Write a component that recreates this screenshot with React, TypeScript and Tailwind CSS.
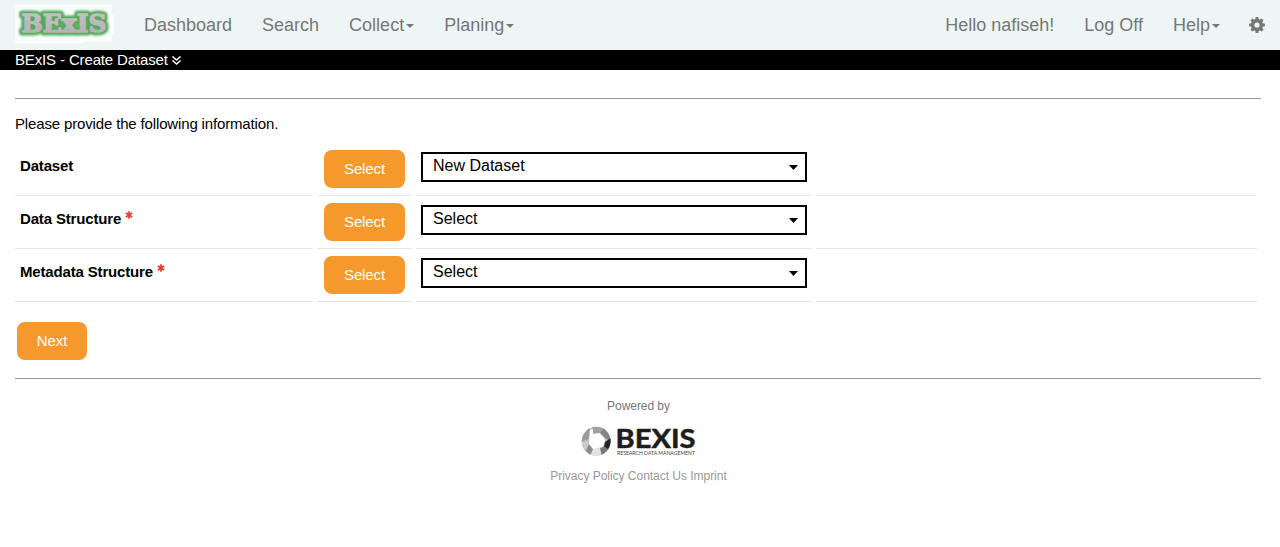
import React from "react";

function Caret({ className }: { className: string }) {
  return (
    <svg className={className} viewBox="0 0 10 5" preserveAspectRatio="none" aria-hidden="true">
      <path d="M0 0h10L5 5z" fill="currentColor" />
    </svg>
  );
}

function Asterisk({ className }: { className: string }) {
  return (
    <svg className={className} viewBox="-4 -4 8 8" aria-hidden="true">
      <g stroke="currentColor" strokeWidth="1.7">
        <path d="M0-3.8V3.8M-3.2-1.9 3.2 1.9M3.2-1.9-3.2 1.9" />
      </g>
    </svg>
  );
}

function DoubleChevron() {
  return (
    <svg className="ml-1 h-[9px] w-[9px]" viewBox="0 0 9 9" fill="none" stroke="currentColor" strokeWidth="1.5" aria-hidden="true">
      <path d="M.5.5 4.5 4 8.5.5M.5 4.5l4 3.5 4-3.5" />
    </svg>
  );
}

function Gear() {
  return (
    <svg className="h-4 w-4" viewBox="-8 -8 16 16" aria-hidden="true">
      <g fill="currentColor">
        {[0, 45, 90, 135].map((angle) => (
          <path key={angle} transform={`rotate(${angle})`} d="M-1.3-7.9h2.6l.7 3v9.8l-.7 3h-2.6l-.7-3v-9.8z" />
        ))}
      </g>
      <circle r="4.3" fill="none" stroke="currentColor" strokeWidth="3.4" />
      <circle r="2.6" fill="#eef6f5" />
    </svg>
  );
}

function BrandLogo() {
  return (
    <svg className="block h-10 w-[99px] shrink-0" viewBox="0 0 99 40" aria-label="BExIS">
      <defs>
        <filter id="glow" x="-10%" y="-30%" width="120%" height="160%">
          <feGaussianBlur stdDeviation="0.8" />
        </filter>
        <linearGradient id="silver" x1="0" y1="0" x2="0" y2="1">
          <stop offset="0" stopColor="#c8c4c8" />
          <stop offset="1" stopColor="#b0b0b0" />
        </linearGradient>
      </defs>
      <path d="M0 1h97v10h2v20h-2v7H68v1H0z" fill="#fafdfb" />
      <g fontFamily="DejaVu Serif" fontWeight="bold" fontSize="24">
        <text x="6.5" y="27.5" textLength="85" lengthAdjust="spacingAndGlyphs" fill="#4fae5a" stroke="#4fae5a" strokeWidth="7" strokeLinejoin="round" filter="url(#glow)">BExIS</text>
        <text x="7" y="28.2" textLength="85" lengthAdjust="spacingAndGlyphs" fill="#6f8a72" stroke="#6f8a72" strokeWidth="1.6">BExIS</text>
        <text x="6.5" y="27.5" textLength="85" lengthAdjust="spacingAndGlyphs" fill="url(#silver)" stroke="url(#silver)" strokeWidth="1.4">BExIS</text>
      </g>
    </svg>
  );
}

function FooterLogo() {
  return (
    <svg className="block h-[38px] w-[116px]" viewBox="0 -6 116 38" aria-label="BEXIS Research Data Management">
      <defs>
        <clipPath id="disc"><circle cx="15.2" cy="15.2" r="14.4" /></clipPath>
      </defs>
      <g clipPath="url(#disc)">
        <path d="M0 0h30v31H0z" fill="#c4c4c4" />
        <path d="M11 0h13l4 6-8 3-9-2z" fill="#a2a2a2" />
        <path d="M23 2 31 9V18L19 7z" fill="#858585" />
        <path d="M31 11v15l-8-5 1-5z" fill="#252525" />
        <path d="M28 24 21 31 18 23 23 20z" fill="#777" />
        <path d="M9 23 19 22 21 31 10 31z" fill="#e2e2e2" />
        <path d="M0 19 8 18 12 23 9 30z" fill="#8c8c8c" />
        <path d="M0 13 8 18 5 24H0z" fill="#cbcbcb" />
        <path d="M9 0 0 11v5l8-3z" fill="#9c9c9c" />
      </g>
      <path d="M9 4 12 3 12 8 19 7 24 14 22 21 12 23 8 18z" fill="#fff" />
      <text x="34.5" y="22" fontFamily="Lato" fontWeight="bold" fontSize="27" textLength="80" lengthAdjust="spacingAndGlyphs" fill="#1d1d1d" stroke="#1d1d1d" strokeWidth="0.5">BEXIS</text>
      <text x="36" y="29.1" fontFamily="Lato" fontSize="5.2" textLength="78" lengthAdjust="spacingAndGlyphs" fill="#444">RESEARCH DATA MANAGEMENT</text>
    </svg>
  );
}

const rows = [
  { label: "Dataset", value: "New Dataset", required: false },
  { label: "Data Structure", value: "Select", required: true },
  { label: "Metadata Structure", value: "Select", required: true },
];

function DatasetRow({ label, value, required }: { label: string; value: string; required: boolean }) {
  return (
    <div className="grid h-[53px] grid-cols-[298px_95px_396px_441px] gap-x-1">
      <div className="flex items-start border-b border-[#e7e7e7] pt-[13px] pl-[5px] text-[15px] leading-5 font-bold tracking-[-0.16px]">
        <span>{label}</span>
        {required && <Asterisk className="mt-[2px] ml-1 h-[8px] w-[8px] text-[#e23b30]" />}
      </div>
      <div className="border-b border-[#e7e7e7] pt-[7px] pl-[7px]">
        <button className="h-[38px] w-[81px] rounded-lg bg-[#f6992d] text-[15px] tracking-[-0.12px] text-white">Select</button>
      </div>
      <div className="border-b border-[#e7e7e7] pt-[9px] pl-[5px]">
        <div className="flex h-[30px] w-[386px] justify-between border-2 border-black pr-[7px] pl-2.5">
          <span className="text-base leading-[23px]">{value}</span>
          <Caret className="mt-[11px] h-[5px] w-[9px]" />
        </div>
      </div>
      <div className="border-b border-[#e7e7e7]" />
    </div>
  );
}

export default function App() {
  return (
    <div className="h-[547px] overflow-hidden bg-white font-['Liberation_Sans',sans-serif] text-black">
      <nav className="flex h-[50px] items-center bg-[#eef6f5] pl-[15px] text-lg leading-5 text-[#777]">
        <div className="-mt-0.5"><BrandLogo /></div>
        <div className="ml-[30px] flex gap-[30px]">
          <a>Dashboard</a>
          <a>Search</a>
          <a className="flex items-center">Collect<Caret className="mt-0.5 ml-0.5 h-1 w-2" /></a>
          <a className="flex items-center">Planing<Caret className="mt-0.5 ml-0.5 h-1 w-2" /></a>
        </div>
        <div className="ml-auto flex items-center gap-[29px] pr-[15px]">
          <a className="mr-px">Hello nafiseh!</a>
          <a className="mr-px">Log Off</a>
          <a className="flex items-center">Help<Caret className="mt-0.5 ml-0.5 h-1 w-2" /></a>
          <Gear />
        </div>
      </nav>
      <header className="flex h-5 items-center bg-black pl-[15px] text-[15px] leading-5 tracking-[-0.14px] text-white">
        BExIS - Create Dataset
        <DoubleChevron />
      </header>
      <main className="mr-[19px] ml-[15px] pt-7">
        <div className="h-px bg-[#999]" />
        <p className="mt-[15px] h-[29px] text-[15px] leading-5 tracking-[-0.15px]">Please provide the following information.</p>
        {rows.map((row) => <DatasetRow key={row.label} {...row} />)}
        <button className="mt-5 ml-0.5 block h-[38px] w-[70px] rounded-lg bg-[#f6992d] text-[15px] tracking-[-0.12px] text-white">Next</button>
        <div className="mt-[18px] h-px bg-[#999]" />
      </main>
      <footer className="flex flex-col items-center pt-[18px] text-xs leading-[18px] text-[#777]">
        <p className="mr-[3px] tracking-[-0.05px]">Powered by</p>
        <div className="mt-[5px] mr-[2px]"><FooterLogo /></div>
        <p className="mt-[9px] mr-[3px] tracking-[-0.03px] text-[#999]">Privacy Policy Contact Us Imprint</p>
      </footer>
    </div>
  );
}
